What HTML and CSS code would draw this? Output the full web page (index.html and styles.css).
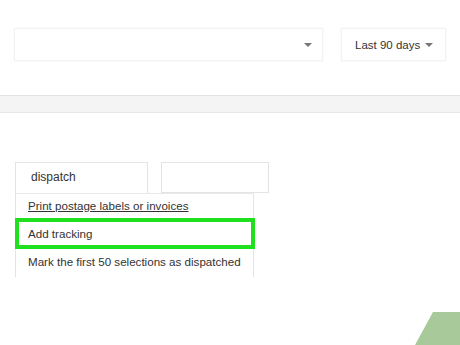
FILE: index.html
```html
<!DOCTYPE html>
<html lang="en">
<head>
  <meta charset="UTF-8">
  <title>Orders - dispatch</title>
  <link rel="stylesheet" href="styles.css">
</head>
<body>
  <section class="filters">
    <div class="select select-wide">
      <span class="select-text"></span>
      <span class="caret"></span>
    </div>
    <div class="select select-range">
      <span class="select-text">Last 90 days</span>
      <span class="caret"></span>
    </div>
  </section>

  <div class="toolbar"></div>

  <section class="actions">
    <div class="action-row">
      <div class="field field-action">dispatch</div>
      <div class="field field-empty"></div>
    </div>
    <ul class="menu">
      <li class="menu-item menu-first"><a href="#">Print postage labels or invoices</a></li>
      <li class="menu-item is-marked">Add tracking</li>
      <li class="menu-item">Mark the first 50 selections as dispatched</li>
    </ul>
  </section>

  <div class="corner"></div>
</body>
</html>
```

FILE: styles.css
```css
body {
  margin: 0;
  padding: 0;
  background-color: #ffffff;
  font-family: 'Liberation Sans', Arial, sans-serif;
  color: #333;
  width: 460px;
  height: 345px;
  overflow: hidden;
  position: relative;
}

.filters {
  display: flex;
  padding: 28px 0 0 14px;
  gap: 18px;
}

.select {
  height: 33px;
  box-sizing: border-box;
  border: 1px solid #f2f2f2;
  box-shadow: 0 0 2px rgba(0, 0, 0, 0.05);
  display: flex;
  align-items: center;
  font-size: 11.5px;
  color: #333;
}

.select-wide {
  width: 309px;
  padding-right: 10px;
}

.select-range {
  width: 105px;
  padding: 0 12px 0 13px;
}

.select-text {
  flex: 1;
}

.caret {
  width: 0;
  height: 0;
  border-left: 4px solid transparent;
  border-right: 4px solid transparent;
  border-top: 4px solid #777;
}

.toolbar {
  margin-top: 34px;
  height: 16px;
  background-color: #f4f4f4;
  border-top: 1px solid #e2e2e2;
  border-bottom: 1px solid #e6e6e6;
}

.actions {
  padding: 49px 0 0 15px;
}

.action-row {
  display: flex;
  gap: 13px;
}

.field {
  height: 31px;
  box-sizing: border-box;
  border: 1px solid #e4e4e4;
  font-size: 12px;
  line-height: 29px;
  color: #333;
}

.field-action {
  width: 133px;
  padding-left: 15px;
  border-bottom: none;
}

.field-empty {
  width: 108px;
}

.menu {
  list-style: none;
  margin: 0;
  padding: 0;
  width: 239px;
  box-sizing: border-box;
  border-left: 1px solid #e4e4e4;
  border-right: 1px solid #e4e4e4;
  border-top: 1px solid #e8e8e8;
}

.menu-item {
  height: 28px;
  line-height: 26px;
  padding-left: 12px;
  font-size: 11.6px;
  color: #333;
  white-space: nowrap;
}

.menu-first {
  height: 24px;
  line-height: 24px;
}

.menu-item a {
  color: #333;
  text-decoration: underline;
}

.menu-item.is-marked {
  height: 31px;
  line-height: 23px;
  margin: 0 -2px 0 -1px;
  border: 4px solid #1fe01f;
  padding-left: 9px;
  box-sizing: border-box;
}

.corner {
  position: absolute;
  right: 0;
  bottom: 0;
  width: 45px;
  height: 33px;
  background-color: #a8c99a;
  clip-path: polygon(40% 0, 100% 0, 100% 100%, 0 100%);
}
```
